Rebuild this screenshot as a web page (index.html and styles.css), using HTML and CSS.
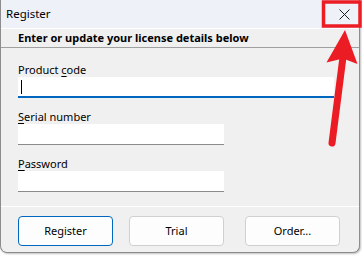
FILE: index.html
```
<html>
<head>
<meta http-equiv="content-type" content="text/html; charset=utf-8">
<link rel="stylesheet" href="styles.css">
<title>Register</title>
</head>
<body>
<div class=win>
<div class=titlebar>
<div class=title>Register</div>
<div class=close><svg width="11" height="11" viewBox="0 0 11 11"><path d="M0.5 0.5L10.5 10.5M10.5 0.5L0.5 10.5" stroke="#1a1a1a" stroke-width="1" fill="none"/></svg></div>
</div>
<div class=headline>Enter or update your license details below</div>
<div class=main>
<div class=lbl>Product <u>c</u>ode</div>
<div class="box wide focus"><span class=caret></span></div>
<div class=lbl><u>S</u>erial number</div>
<div class=box></div>
<div class=lbl><u>P</u>assword</div>
<div class=box></div>
</div>
<div class=foot>
<div class="btn def">Register</div>
<div class="btn trial">Trial</div>
<div class=btn>Order...</div>
</div>
</div>
<svg class=mark width="362" height="257" viewBox="0 0 362 257">
<rect x="323.5" y="2" width="36.5" height="24" fill="none" stroke="#ec1c24" stroke-width="3.5"/>
<line x1="343" y1="57" x2="332" y2="143" stroke="#ec1c24" stroke-width="7" stroke-linecap="round"/>
<polygon points="345,30 357.5,64 343,58.5 326.5,62.5" fill="#ec1c24"/>
</svg>
</body>
</html>
```
FILE: styles.css
```
html,body{margin:0;padding:0;background:#ffffff}
body{font-family:"Noto Sans","Open Sans","DejaVu Sans",sans-serif;font-size:11px;color:#000;position:relative;width:362px;height:257px;overflow:hidden}
.win{box-sizing:border-box;width:360px;height:253px;background:#f0f0f0;border:1px solid #8c8c8c;border-top:0;border-radius:0 0 7px 7px;box-shadow:1px 1px 2px rgba(0,0,0,0.25);display:flex;flex-direction:column;overflow:hidden}
.titlebar{height:28px;flex:none;background:#eef2f8;display:flex;align-items:center;justify-content:space-between;border-bottom:1px solid #ffffff}
.title{padding-left:5px;line-height:28px;font-size:11.5px}
.close{height:28px;display:flex;align-items:center;padding-right:9px}
.close svg{display:block}
.headline{height:18px;flex:none;line-height:18px;padding-left:17px;font-weight:bold;border-bottom:1px solid #a0a0a0;background:#f0f0f0}
.main{flex:1;padding-left:17px;padding-top:14px}
.lbl{height:15px;line-height:15px}
.box{width:206px;height:21px;background:#fff;border-bottom:1px solid #8a8a8a;margin-bottom:11px;box-sizing:border-box}
.wide{width:316px}
.focus{border-bottom:2px solid #0067c0;display:flex;align-items:center;padding-left:3px}
.caret{display:block;width:1px;height:14px;background:#000}
.foot{flex:none;border-top:1px solid #ffffff;display:flex;align-items:flex-start;padding-left:17px;padding-top:9px;box-sizing:border-box;height:46px}
.btn{box-sizing:border-box;width:95px;height:30px;line-height:28px;text-align:center;background:#fdfdfd;border:1px solid #d0d0d0;border-radius:4px;margin-right:16px}
.def{border:1px solid #0067c0}
.trial{margin-right:21px}
u{text-decoration:underline;text-underline-offset:2px}
.mark{position:absolute;left:0;top:0;pointer-events:none}
```
